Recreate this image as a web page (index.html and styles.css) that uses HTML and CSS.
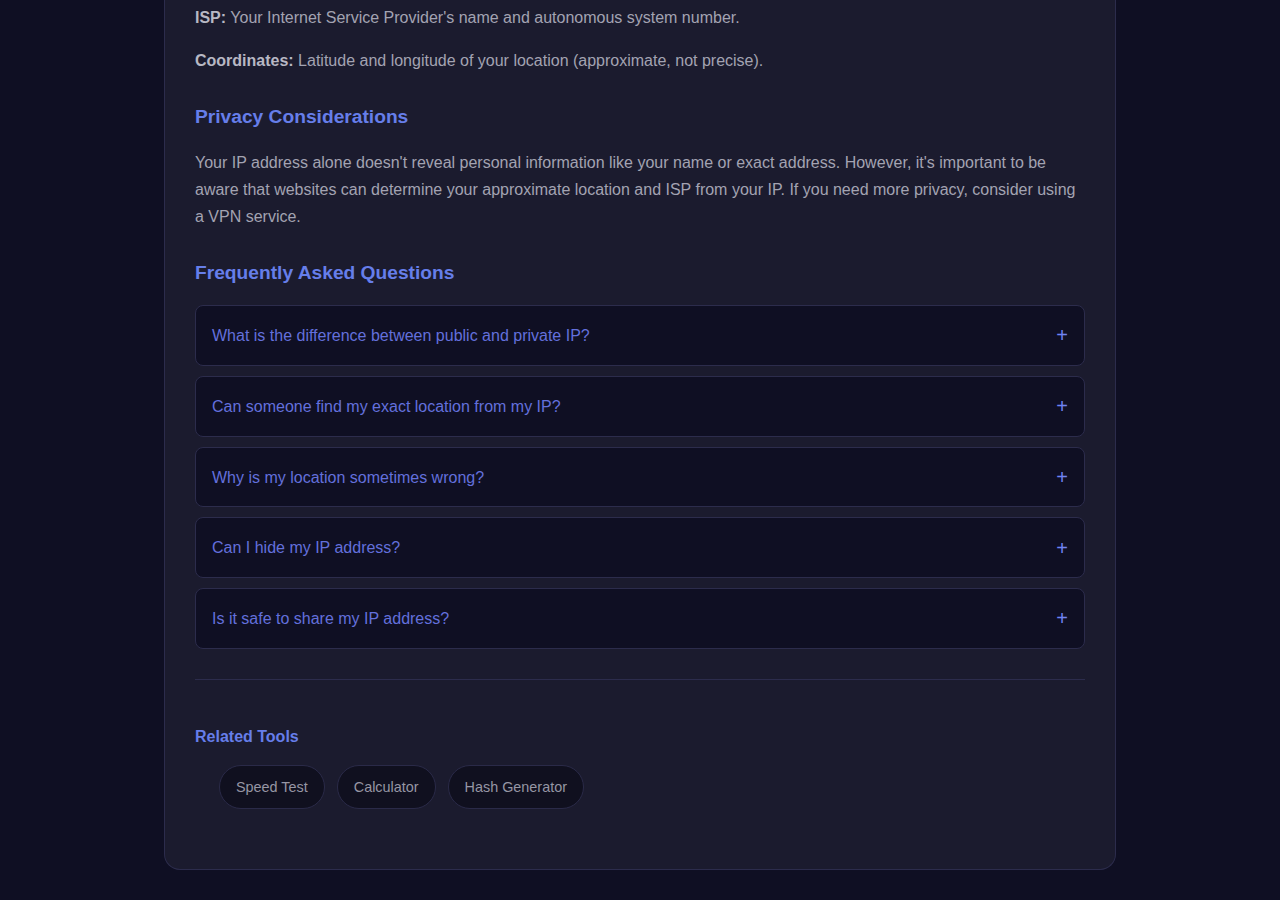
FILE: index.html
```html
<!DOCTYPE html>
<html lang="en">
<head>
    <meta charset="UTF-8">
    <meta name="viewport" content="width=device-width, initial-scale=1.0">
    <title>What Is My IP</title>
    <link rel="stylesheet" href="styles.css">
</head>
<body>
    <div id="container">
        <div class="card">
            <p><strong>ISP:</strong> Your Internet Service Provider's name and autonomous system number.</p>
            <p><strong>Coordinates:</strong> Latitude and longitude of your location (approximate, not precise).</p>

            <h3>Privacy Considerations</h3>
            <p>Your IP address alone doesn't reveal personal information like your name or exact address. However, it's important to be aware that websites can determine your approximate location and ISP from your IP. If you need more privacy, consider using a VPN service.</p>

            <h3>Frequently Asked Questions</h3>
            <div class="faq">
                <div class="faq-item">
                    <button class="faq-question"><span>What is the difference between public and private IP?</span><span class="faq-icon">+</span></button>
                </div>
                <div class="faq-item">
                    <button class="faq-question"><span>Can someone find my exact location from my IP?</span><span class="faq-icon">+</span></button>
                </div>
                <div class="faq-item">
                    <button class="faq-question"><span>Why is my location sometimes wrong?</span><span class="faq-icon">+</span></button>
                </div>
                <div class="faq-item">
                    <button class="faq-question"><span>Can I hide my IP address?</span><span class="faq-icon">+</span></button>
                </div>
                <div class="faq-item">
                    <button class="faq-question"><span>Is it safe to share my IP address?</span><span class="faq-icon">+</span></button>
                </div>
            </div>

            <div class="related">
                <h4>Related Tools</h4>
                <ul class="tool-links">
                    <li><a href="#">Speed Test</a></li>
                    <li><a href="#">Calculator</a></li>
                    <li><a href="#">Hash Generator</a></li>
                </ul>
            </div>
        </div>
    </div>
</body>
</html>
```

FILE: styles.css
```css
body {
    font-family: "Liberation Sans", Arial, sans-serif;
    margin: 0;
    padding: 0;
    background-color: #0f0f23;
    color: #a3a3b2;
}

#container {
    width: 952px;
    margin: 0 auto;
    padding-bottom: 30px;
}

.card {
    background-color: #1b1b2e;
    border: 1px solid #2c2c4c;
    border-top: none;
    border-radius: 0 0 16px 16px;
    padding: 4px 30px 30px;
}

p {
    font-size: 16px;
    line-height: 27px;
    margin: 0 0 16px;
}

p strong {
    color: #b8b8c4;
}

h3 {
    font-size: 19.2px;
    line-height: 22px;
    color: #667eea;
    margin: 32px 0 21px;
}

.faq {
    margin-top: 21px;
}

.faq-item {
    background-color: #0f0f23;
    border: 1px solid #2c2c4c;
    border-radius: 8px;
    margin-bottom: 10px;
}

.faq-question {
    display: flex;
    justify-content: space-between;
    align-items: center;
    width: 100%;
    padding: 21px 16px 20px;
    border: none;
    background: none;
    color: #6370dc;
    font-family: inherit;
    font-size: 16px;
    line-height: 17.75px;
    text-align: left;
    cursor: pointer;
}

.faq-icon {
    color: #6f83f2;
    font-size: 20px;
    line-height: 17px;
}

.related {
    border-top: 1px solid #2c2c4c;
    margin-top: 30px;
    padding-top: 48px;
}

.related h4 {
    font-size: 16px;
    line-height: 18px;
    color: #667eea;
    margin: 0 0 19px;
}

.tool-links {
    list-style: none;
    display: flex;
    gap: 12px;
    margin: 0;
    padding: 0 0 30px 24px;
}

.tool-links a {
    display: block;
    padding: 12px 16px;
    font-size: 14.4px;
    line-height: 18px;
    color: #9696a4;
    text-decoration: none;
    background-color: #10101f;
    border: 1px solid #2a2a48;
    border-radius: 22px;
}

.tool-links a:hover {
    color: #667eea;
}
```
